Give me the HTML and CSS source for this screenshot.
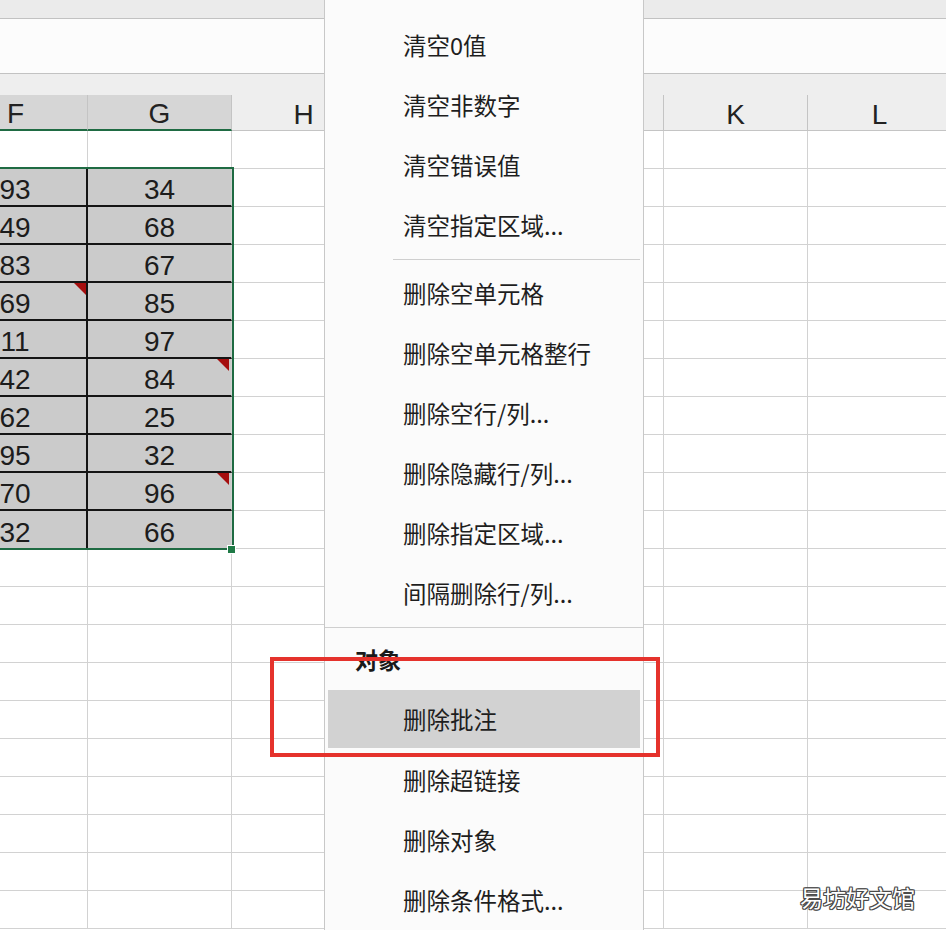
FILE: index.html
```html
<!DOCTYPE html>
<html lang="zh-CN">
<head>
<meta charset="utf-8">
<title>Sheet</title>
<link rel="stylesheet" href="styles.css">
</head>
<body>
<div class="app">
  <div class="topbar"></div>
  <div class="formula"></div>
  <div class="colhead">
    <div class="hcell sel">F</div>
    <div class="hcell sel">G</div>
    <div class="hcell">H</div>
    <div class="hcell"></div>
    <div class="hcell"></div>
    <div class="hcell">K</div>
    <div class="hcell">L</div>
  </div>
  <div class="sheet">
    <div class="c"></div><div class="c"></div><div class="c"></div><div class="c"></div><div class="c"></div><div class="c"></div><div class="c"></div>

    <div class="c d f">93</div><div class="c d g">34</div><div class="c"></div><div class="c"></div><div class="c"></div><div class="c"></div><div class="c"></div>
    <div class="c d f">49</div><div class="c d g">68</div><div class="c"></div><div class="c"></div><div class="c"></div><div class="c"></div><div class="c"></div>
    <div class="c d f">83</div><div class="c d g">67</div><div class="c"></div><div class="c"></div><div class="c"></div><div class="c"></div><div class="c"></div>
    <div class="c d f">69<span class="note"></span></div><div class="c d g">85</div><div class="c"></div><div class="c"></div><div class="c"></div><div class="c"></div><div class="c"></div>
    <div class="c d f">11</div><div class="c d g">97</div><div class="c"></div><div class="c"></div><div class="c"></div><div class="c"></div><div class="c"></div>
    <div class="c d f">42</div><div class="c d g">84<span class="note"></span></div><div class="c"></div><div class="c"></div><div class="c"></div><div class="c"></div><div class="c"></div>
    <div class="c d f">62</div><div class="c d g">25</div><div class="c"></div><div class="c"></div><div class="c"></div><div class="c"></div><div class="c"></div>
    <div class="c d f">95</div><div class="c d g">32</div><div class="c"></div><div class="c"></div><div class="c"></div><div class="c"></div><div class="c"></div>
    <div class="c d f">70</div><div class="c d g">96<span class="note"></span></div><div class="c"></div><div class="c"></div><div class="c"></div><div class="c"></div><div class="c"></div>
    <div class="c d f last">32</div><div class="c d g last">66</div><div class="c"></div><div class="c"></div><div class="c"></div><div class="c"></div><div class="c"></div>

    <div class="c"></div><div class="c"></div><div class="c"></div><div class="c"></div><div class="c"></div><div class="c"></div><div class="c"></div>
    <div class="c"></div><div class="c"></div><div class="c"></div><div class="c"></div><div class="c"></div><div class="c"></div><div class="c"></div>
    <div class="c"></div><div class="c"></div><div class="c"></div><div class="c"></div><div class="c"></div><div class="c"></div><div class="c"></div>
    <div class="c"></div><div class="c"></div><div class="c"></div><div class="c"></div><div class="c"></div><div class="c"></div><div class="c"></div>
    <div class="c"></div><div class="c"></div><div class="c"></div><div class="c"></div><div class="c"></div><div class="c"></div><div class="c"></div>
    <div class="c"></div><div class="c"></div><div class="c"></div><div class="c"></div><div class="c"></div><div class="c"></div><div class="c"></div>
    <div class="c"></div><div class="c"></div><div class="c"></div><div class="c"></div><div class="c"></div><div class="c"></div><div class="c"></div>
    <div class="c"></div><div class="c"></div><div class="c"></div><div class="c"></div><div class="c"></div><div class="c"></div><div class="c"></div>
    <div class="c"></div><div class="c"></div><div class="c"></div><div class="c"></div><div class="c"></div><div class="c"></div><div class="c"></div>
    <div class="c"></div><div class="c"></div><div class="c"></div><div class="c"></div><div class="c"></div><div class="c"></div><div class="c"></div>
  </div>

  <div class="selection"></div>
  <div class="handle"></div>

  <div class="menu">
    <div class="item">清空0值</div>
    <div class="item">清空非数字</div>
    <div class="item">清空错误值</div>
    <div class="item">清空指定区域...</div>
    <div class="sep short"></div>
    <div class="item">删除空单元格</div>
    <div class="item">删除空单元格整行</div>
    <div class="item">删除空行/列...</div>
    <div class="item">删除隐藏行/列...</div>
    <div class="item">删除指定区域...</div>
    <div class="item">间隔删除行/列...</div>
    <div class="sep"></div>
    <div class="group">对象</div>
    <div class="item hot">删除批注</div>
    <div class="item">删除超链接</div>
    <div class="item">删除对象</div>
    <div class="item">删除条件格式...</div>
  </div>

  <div class="redbox"></div>
  <div class="watermark">易坊好文馆</div>
</div>
</body>
</html>
```

FILE: styles.css
```css
* { box-sizing: border-box; }
html, body { margin: 0; padding: 0; background: #ffffff; }
.app {
  position: relative;
  width: 946px;
  height: 930px;
  overflow: hidden;
  background: #ffffff;
  font-family: "Liberation Sans", Arial, sans-serif;
}
.topbar {
  height: 19px;
  background: #ebebeb;
  border-bottom: 1px solid #c2c2c2;
}
.formula {
  height: 55px;
  background: #fcfcfc;
  border-bottom: 1px solid #c2c2c2;
}
.colhead {
  display: grid;
  grid-template-columns: repeat(7, 144px);
  margin-left: -56px;
  height: 57px;
  padding-top: 21px;
  background: #eeeeee;
  border-bottom: 1px solid #c4c4c4;
}
.hcell {
  height: 35px;
  border-right: 1px solid #c4c4c4;
  display: flex;
  align-items: center;
  justify-content: center;
  padding-top: 4px;
  font-size: 28px;
  color: #222;
}
.hcell.sel {
  background: #d6d6d6;
  height: 36px;
  margin-bottom: -1px;
  border-bottom: 2px solid #1f6b43;
}
.sheet {
  display: grid;
  grid-template-columns: repeat(7, 144px);
  grid-auto-rows: 38px;
  margin-left: -56px;
}
.c {
  position: relative;
  border-right: 1px solid #d2d2d2;
  border-bottom: 1px solid #d2d2d2;
  display: flex;
  align-items: center;
  justify-content: center;
  padding-top: 6px;
  font-size: 28px;
  color: #1c1c1c;
}
.c.d {
  background: #cbcbcb;
  border-bottom: 2px solid #141414;
}
.c.d.f { border-right: 2px solid #141414; }
.c.d.last { border-bottom: 1px solid #cbcbcb; }
.note {
  position: absolute;
  top: 0;
  right: 0;
  width: 0;
  height: 0;
  border-top: 12px solid #a50e0e;
  border-left: 12px solid transparent;
}
.c.d.g .note { right: 2px; }
.selection {
  position: absolute;
  left: -10px;
  top: 167px;
  width: 244px;
  height: 383px;
  border: 2px solid #1f6b43;
}
.handle {
  position: absolute;
  left: 227px;
  top: 545px;
  width: 9px;
  height: 9px;
  background: #1f7a46;
  border: 1px solid #ffffff;
}
.menu {
  position: absolute;
  left: 324px;
  top: 0;
  width: 320px;
  height: 930px;
  background: #fbfbfb;
  border-left: 1px solid #c8c8c8;
  border-right: 1px solid #c8c8c8;
  padding-top: 15px;
  font-family: "Noto Sans CJK SC", "Noto Sans", sans-serif;
  display: flex;
  flex-direction: column;
}
.item {
  height: 60px;
  flex: none;
  display: flex;
  align-items: center;
  padding-left: 78px;
  font-size: 23.5px;
  color: #1e1e1e;
}
.item.hot {
  height: 58px;
  margin: 0 3px 2px 3px;
  padding-left: 75px;
  background: #d2d2d2;
}
.sep {
  height: 8px;
  flex: none;
  position: relative;
}
.sep::after {
  content: "";
  position: absolute;
  left: 0;
  right: 0;
  top: 4px;
  border-top: 1px solid #cfcfcf;
}
.sep.short::after { left: 68px; right: 3px; }
.group {
  height: 59px;
  flex: none;
  display: flex;
  align-items: center;
  padding-left: 30px;
  padding-bottom: 4px;
  font-size: 23px;
  font-weight: bold;
  color: #1a1a1a;
}
.redbox {
  position: absolute;
  left: 270px;
  top: 657px;
  width: 390px;
  height: 100px;
  border: 4px solid #e5322c;
}
.watermark {
  position: absolute;
  left: 800px;
  top: 880px;
  font-family: "Noto Sans CJK SC", sans-serif;
  font-size: 23px;
  color: #ffffff;
  text-shadow: 1px 0 0 #4a4a4a, -1px 0 0 #4a4a4a, 0 1px 0 #4a4a4a, 0 -1px 0 #4a4a4a,
               1px 1px 0 #4a4a4a, -1px -1px 0 #4a4a4a, 1px -1px 0 #4a4a4a, -1px 1px 0 #4a4a4a;
}
```
